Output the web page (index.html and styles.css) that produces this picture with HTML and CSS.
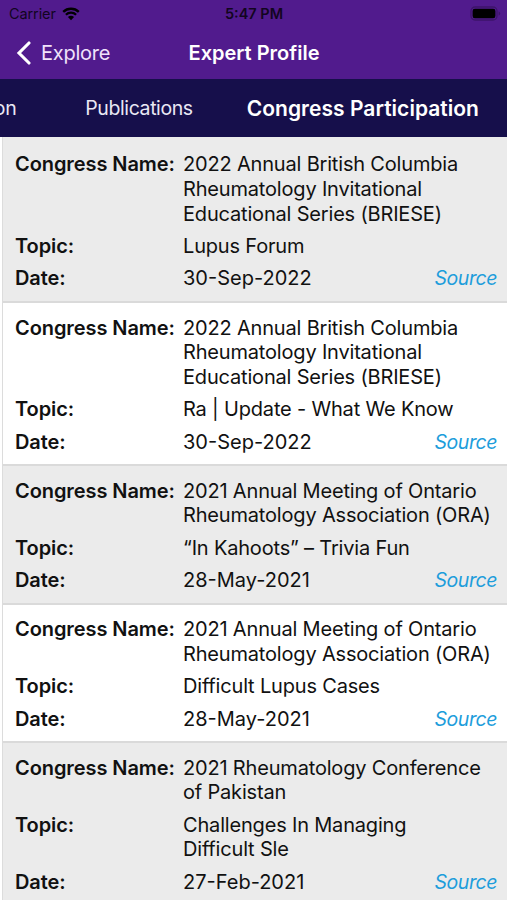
FILE: index.html
```html
<!DOCTYPE html>
<html lang="en">
  <head>
    <meta charset="UTF-8" />
    <meta name="viewport" content="width=device-width, initial-scale=1.0" />
    <title>Expert Profile</title>
    <link rel="stylesheet" href="styles.css">
  </head>
  <body>
    <header class="header">
      <div class="status">
        <div class="carrier">
          <span>Carrier</span>
          <svg class="wifi" width="18" height="14" viewBox="0 0 18 14">
            <path d="M1.2 4.9a11.2 11.2 0 0 1 15.6 0M3.9 7.8a7.3 7.3 0 0 1 10.2 0" fill="none" stroke="currentColor" stroke-width="2.3" />
            <path d="M5.9 10.1a4.5 4.5 0 0 1 6.2 0L9 13.3z" fill="currentColor" />
          </svg>
        </div>
        <div class="time">5:47 PM</div>
        <svg class="battery" width="31" height="15" viewBox="0 0 31 15">
          <rect x="1" y="1" width="26" height="13" rx="4" fill="none" stroke="currentColor" stroke-opacity=".25" stroke-width="1.3" />
          <rect x="2.6" y="2.8" width="22.8" height="9.4" rx="2.2" fill="currentColor" />
          <path d="M28.6 5.3q1.6.7 1.6 2.2t-1.6 2.2z" fill="currentColor" fill-opacity=".25" />
        </svg>
      </div>
      <nav class="nav">
        <a class="back">
          <svg width="15" height="24" viewBox="0 0 15 24">
            <path d="M13 2 3 12l10 10" fill="none" stroke="currentColor" stroke-width="3.1" stroke-linecap="round" stroke-linejoin="miter" />
          </svg>
          <span>Explore</span>
        </a>
        <h1>Expert Profile</h1>
        <div></div>
      </nav>
    </header>

    <div class="tabs">
      <div class="tab">Education</div>
      <div class="tab">Publications</div>
      <div class="tab tab_active">Congress Participation</div>
    </div>

    <main class="list">
      <div class="card">
        <div class="label">Congress Name:</div>
        <div class="value">2022 Annual British Columbia<br />Rheumatology Invitational<br />Educational Series (BRIESE)</div>
        <div class="label">Topic:</div>
        <div class="value">Lupus Forum</div>
        <div class="label">Date:</div>
        <div class="value row"><span class="date">30-Sep-2022</span><a class="source">Source</a></div>
      </div>

      <div class="card">
        <div class="label">Congress Name:</div>
        <div class="value">2022 Annual British Columbia<br />Rheumatology Invitational<br />Educational Series (BRIESE)</div>
        <div class="label">Topic:</div>
        <div class="value">Ra | Update - What We Know</div>
        <div class="label">Date:</div>
        <div class="value row"><span class="date">30-Sep-2022</span><a class="source">Source</a></div>
      </div>

      <div class="card">
        <div class="label">Congress Name:</div>
        <div class="value">2021 Annual Meeting of Ontario<br />Rheumatology Association (ORA)</div>
        <div class="label">Topic:</div>
        <div class="value">“In Kahoots” – Trivia Fun</div>
        <div class="label">Date:</div>
        <div class="value row"><span class="date">28-May-2021</span><a class="source">Source</a></div>
      </div>

      <div class="card">
        <div class="label">Congress Name:</div>
        <div class="value">2021 Annual Meeting of Ontario<br />Rheumatology Association (ORA)</div>
        <div class="label">Topic:</div>
        <div class="value">Difficult Lupus Cases</div>
        <div class="label">Date:</div>
        <div class="value row"><span class="date">28-May-2021</span><a class="source">Source</a></div>
      </div>

      <div class="card">
        <div class="label">Congress Name:</div>
        <div class="value">2021 Rheumatology Conference<br />of Pakistan</div>
        <div class="label">Topic:</div>
        <div class="value">Challenges In Managing<br />Difficult Sle</div>
        <div class="label">Date:</div>
        <div class="value row"><span class="date">27-Feb-2021</span><a class="source">Source</a></div>
      </div>
    </main>
  </body>
</html>
```
FILE: styles.css
```css
* {
  box-sizing: border-box;
}
body {
  margin: 0;
  height: 100vh;
  overflow: hidden;
  display: flex;
  flex-direction: column;
  font-family: Inter, "Liberation Sans", sans-serif;
  font-size: 20px;
  color: #111;
  background-color: #fff;
}

.header {
  flex: none;
  height: 79px;
  background-color: #511b8d;
}
.status {
  display: grid;
  grid-template-columns: 1fr auto 1fr;
  align-items: center;
  height: 27px;
  padding: 0 6px 0 9px;
  font-size: 14.5px;
  color: #12051f;
}
.carrier {
  display: flex;
  align-items: center;
  gap: 6px;
  letter-spacing: -0.1px;
}
.wifi,
.battery {
  color: #000;
}
.time {
  margin-right: 2px;
  font-weight: 600;
  font-size: 14.5px;
}
.battery {
  justify-self: end;
}
.nav {
  display: grid;
  grid-template-columns: 1fr auto 1fr;
  align-items: center;
  height: 51px;
  padding: 0 15px 0 16px;
  color: #fff;
}
.back {
  display: flex;
  align-items: center;
  gap: 10px;
  letter-spacing: -0.25px;
  color: #f0e2fb;
}
.back svg {
  color: #fff;
}
.nav h1 {
  margin: 0;
  font-size: 20px;
  font-weight: 600;
}

.tabs {
  flex: none;
  display: flex;
  justify-content: flex-end;
  align-items: center;
  height: 58px;
  padding-right: 28px;
  background-color: #160f4b;
  font-size: 19.5px;
  letter-spacing: -0.4px;
  color: #e9e7f4;
  white-space: nowrap;
}
.tab {
  margin-right: 69px;
}
.tab + .tab {
  margin-right: 54px;
}
.tab.tab_active {
  margin-right: 0;
  font-size: 21px;
  font-weight: 600;
  letter-spacing: 0.03px;
  color: #fff;
}

.list {
  flex: none;
  margin-left: 2px;
  border-left: 1px solid #dcdcdc;
}
.card {
  display: grid;
  grid-template-columns: 168px 1fr;
  row-gap: 7.8px;
  padding: 12.4px 10px 10.2px 12px;
  border-bottom: 2px solid #dadada;
  line-height: 24.6px;
  white-space: nowrap;
}
.card:first-child {
  padding-top: 15.4px;
}
.card:nth-child(odd) {
  background-color: #ebebeb;
}
.label {
  font-weight: 600;
  letter-spacing: -0.08px;
}
.value {
  letter-spacing: -0.18px;
}
.row {
  display: flex;
  justify-content: space-between;
}
.date {
  letter-spacing: 0;
}
.source {
  font-size: 19.5px;
  font-style: italic;
  letter-spacing: -0.45px;
  color: #1d9ddb;
}
```
